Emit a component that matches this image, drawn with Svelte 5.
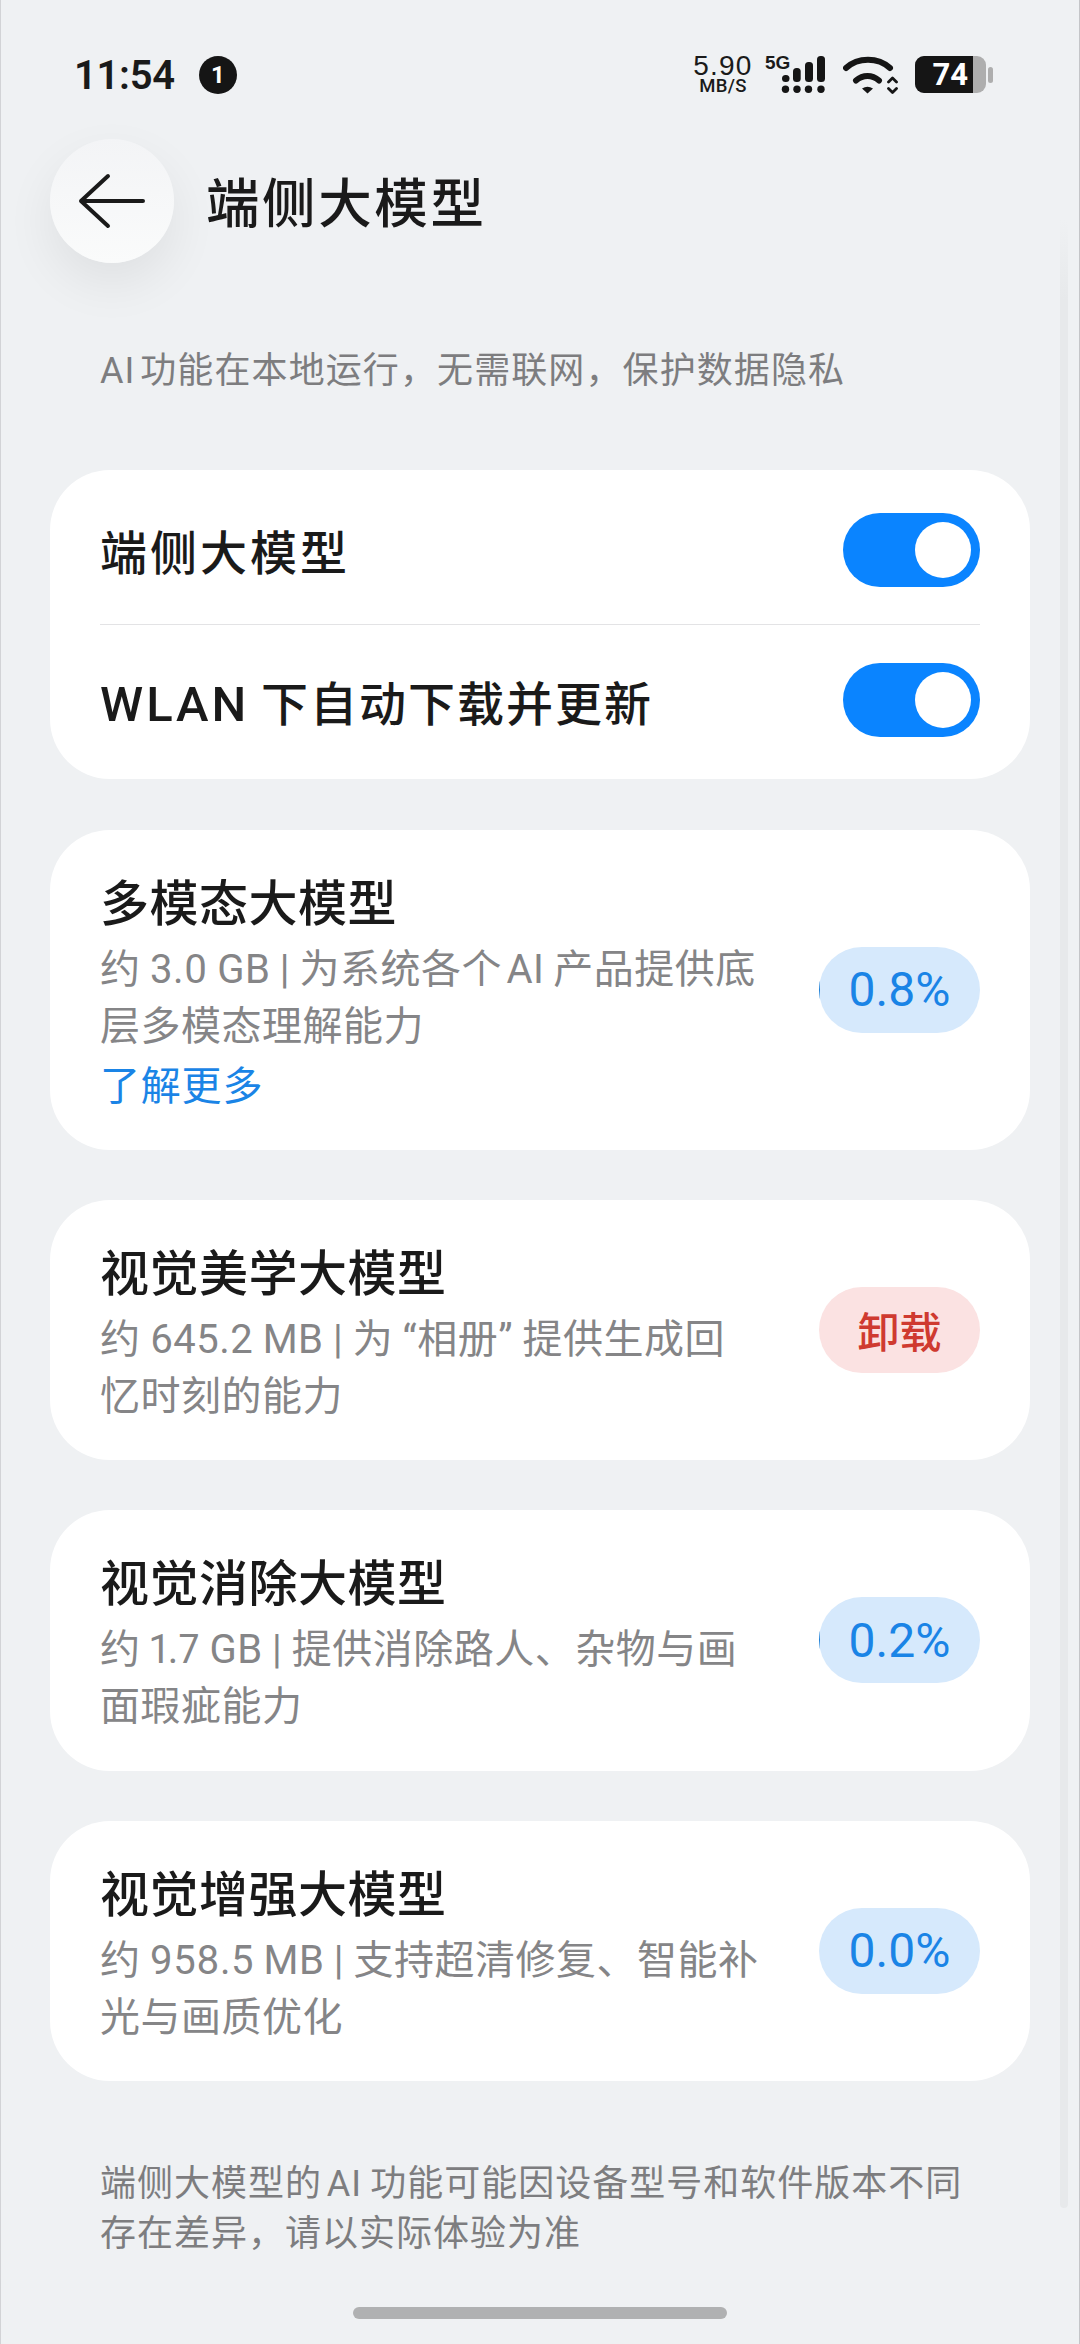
<script>
  const T = '\u2009';
  const H = '\u200a';
  const models = [
    { title: '多模态大模型', lines: [`约 3.0 GB | 为系统各个${H}AI${T}产品提供底`, '层多模态理解能力'], link: '了解更多', progress: 0.8 },
    { title: '视觉美学大模型', lines: ['约 645.2 MB | 为 “相册” 提供生成回', '忆时刻的能力'], action: '卸载' },
    { title: '视觉消除大模型', lines: ['约 1.7 GB | 提供消除路人、杂物与画', '面瑕疵能力'], progress: 0.2 },
    { title: '视觉增强大模型', lines: ['约 958.5 MB | 支持超清修复、智能补', '光与画质优化'], progress: 0.0 }
  ];
</script>

<div class="screen">
  <div class="edge-left"></div>
  <div class="edge-right"></div>
  <div class="edge-strip"></div>

  <div class="status">
    <div class="status-left">
      <span class="time">11:54</span>
      <span class="badge">1</span>
    </div>
    <div class="status-right">
      <div class="speed"><span class="speed-num">5.90</span><span class="speed-unit">MB/S</span></div>
      <div class="signal">
        <span class="five-g">5G</span>
        <svg width="44" height="37" viewBox="0 0 44 37" fill="#151515">
          <circle cx="4.500" cy="33.300" r="3.700"/><circle cx="16" cy="33.300" r="3.700"/><circle cx="27.500" cy="33.300" r="3.700"/><circle cx="40" cy="33.300" r="3.700"/>
          <rect x="1" y="19" width="7.500" height="7" rx="3.500"/>
          <rect x="12" y="12" width="7.700" height="14" rx="3.500"/>
          <rect x="24" y="6" width="8" height="20" rx="3.500"/>
          <rect x="36" y="0" width="8" height="26" rx="3.500"/>
        </svg>
      </div>
      <svg class="wifi" width="56" height="38" viewBox="0 0 56 38" fill="none">
        <path d="M3 12 C15 1 35 1 47 12" stroke="#151515" stroke-width="6" stroke-linecap="round"/>
        <path d="M13 24.500 C20 18.500 29 18.500 36 24.500" stroke="#151515" stroke-width="6" stroke-linecap="round"/>
        <path d="M19 32.500 Q24.500 29 30 32.500 L24.500 37.500 Z" fill="#151515"/>
        <path d="M45.500 26 L49.500 22 L53.500 26 M45.500 32.500 L49.500 36.500 L53.500 32.500" stroke="#151515" stroke-width="2.800" stroke-linecap="round" stroke-linejoin="round"/>
      </svg>
      <div class="battery">
        <div class="battery-body"><div class="battery-fill"><span>74</span></div></div>
        <div class="battery-nub"></div>
      </div>
    </div>
  </div>

  <div class="header">
    <button class="back" aria-label="返回">
      <svg width="70" height="60" viewBox="0 0 70 60" fill="none">
        <path d="M31 5 L4 30 L31 55 M4 30 H66" stroke="#1a1a1a" stroke-width="4" stroke-linecap="round" stroke-linejoin="round"/>
      </svg>
    </button>
    <h1>端侧大模型</h1>
  </div>

  <p class="intro">AI{H}功能在本地运行，无需联网，保护数据隐私</p>

  <div class="card switches">
    <div class="row first">
      <span class="label">端侧大模型</span>
      <span class="toggle"><span class="knob"></span></span>
    </div>
    <div class="divider"></div>
    <div class="row second">
      <span class="label"><span class="latin">WLAN</span>{T}下自动下载并更新</span>
      <span class="toggle"><span class="knob"></span></span>
    </div>
  </div>

  {#each models as m}
    <div class="card model">
      <div class="info">
        <div class="title">{m.title}</div>
        {#each m.lines as l}
          <div class="desc">{l}</div>
        {/each}
        {#if m.link}<div class="link">{m.link}</div>{/if}
      </div>
      {#if m.action}
        <span class="pill danger">{m.action}</span>
      {:else}
        <span class="pill">
          <span class="fill" style="width:{m.progress}%"></span>
          <span class="pct">{m.progress.toFixed(1)}%</span>
        </span>
      {/if}
    </div>
  {/each}

  <p class="footnote">端侧大模型的{H}AI{T}功能可能因设备型号和软件版本不同<br />存在差异，请以实际体验为准</p>

  <div class="home"></div>
</div>

<style>
  :global(body) { margin: 0; background: #eff1f3; }
  .screen {
    position: relative;
    width: 1080px;
    height: 2344px;
    overflow: hidden;
    background: #eff1f3;
    padding: 0 50px;
    box-sizing: border-box;
    font-family: "Roboto", "Noto Sans CJK SC", sans-serif;
    color: #171717;
  }
  .edge-left { position: absolute; left: 0; top: 0; bottom: 0; width: 1px; background: #d2d3d6; }
  .edge-right { position: absolute; right: 0; top: 0; bottom: 0; width: 1px; background: #c4c5c8; }
  .edge-strip { position: absolute; left: 1060px; top: 220px; height: 1988px; width: 8px; border-radius: 0 0 4px 4px; background: linear-gradient(180deg, rgba(230, 232, 234, 0) 0, #e7e9eb 80px); }

  .status { height: 138px; display: flex; justify-content: space-between; box-sizing: border-box; padding: 55px 37px 0 24px; }
  .status-left { display: flex; align-items: center; height: 40px; gap: 24px; }
  .time { font-size: 40px; font-weight: 600; color: #1a1a1a; letter-spacing: -0.3px; }
  .badge { width: 38px; height: 38px; border-radius: 50%; background: #151515; color: #fff; font-size: 24px; font-weight: 700; display: flex; align-items: center; justify-content: center; }
  .status-right { display: flex; align-items: flex-start; height: 40px; }
  .speed { display: flex; flex-direction: column; align-items: center; width: 60px; color: #1a1a1a; }
  .speed-num { font-size: 28px; line-height: 22px; font-family: "Liberation Sans", sans-serif; letter-spacing: 1.200px; }
  .speed-unit { font-size: 18.500px; line-height: 16px; font-weight: 500; margin-top: 1px; letter-spacing: 0.3px; }
  .signal { margin-left: 12px; position: relative; width: 60px; height: 38px; }
  .five-g { font-size: 19px; line-height: 16px; font-weight: 700; font-family: "Liberation Sans", sans-serif; color: #1a1a1a; position: absolute; left: 0; top: 0; }
  .signal svg { position: absolute; right: 0; top: 1px; }
  .wifi { margin-left: 18px; margin-top: 1px; }
  .battery { display: flex; align-items: center; margin-left: 16px; height: 37px; margin-top: 1px; }
  .battery-body { width: 71px; height: 37px; border-radius: 9px; background: #aeaeae; overflow: hidden; }
  .battery-fill { width: 58px; height: 100%; background: #151515; display: flex; align-items: center; justify-content: flex-end; padding-right: 5px; box-sizing: border-box; }
  .battery-fill span { color: #fff; font-size: 31px; font-weight: 700; line-height: 1; }
  .battery-nub { width: 5px; height: 16px; border-radius: 2.500px; background: #aeaeae; margin-left: 2px; }

  .header { display: flex; align-items: center; height: 126px; gap: 32px; }
  .back { width: 124px; height: 124px; border: 0; padding: 0; border-radius: 50%; background: linear-gradient(180deg, #f3f4f6 0%, #fafbfb 100%); box-shadow: 0 20px 50px rgba(0, 0, 0, 0.07); display: flex; align-items: center; justify-content: center; }
  h1 { margin: 0 0 4px; font-size: 53.500px; font-weight: 500; letter-spacing: 2.600px; color: #1a1a1a; }

  .intro { margin: 0; padding: 84px 0 76px 50px; font-size: 36px; line-height: 46px; color: #7d7d7f; letter-spacing: 1.100px; }

  .card { background: #fff; border-radius: 60px; margin-bottom: 50px; padding: 0 50px; }
  .switches { height: 309px; margin-bottom: 51px; }
  .row { height: 154px; display: flex; align-items: center; justify-content: space-between; box-sizing: border-box; }
  .row.first { padding-top: 5px; }
  .row.second { padding-bottom: 4px; }
  .label { font-size: 47px; font-weight: 500; letter-spacing: 3px; color: #1a1a1a; }
  .second .label { letter-spacing: 2px; }
  .second .latin { font-size: 49px; letter-spacing: 3px; }
  .divider { height: 1px; background: #e3e3e5; }
  .toggle { width: 137px; height: 74px; border-radius: 37px; background: #0a84ff; display: flex; align-items: center; justify-content: flex-end; padding-right: 9px; box-sizing: border-box; }
  .knob { width: 56px; height: 56px; border-radius: 50%; background: #fff; }

  .model { display: flex; align-items: center; justify-content: space-between; padding-top: 45px; padding-bottom: 35.500px; }
  .info { flex: 1; min-width: 0; }
  .title { font-size: 49px; line-height: 60px; font-weight: 500; letter-spacing: 0.5px; color: #1a1a1a; margin-bottom: 6px; }
  .desc { font-size: 40px; line-height: 57px; color: #858587; letter-spacing: 0.5px; word-spacing: -1px; white-space: nowrap; font-variant-numeric: proportional-nums; }
  .link { font-size: 40px; line-height: 54px; color: #1a84e6; letter-spacing: 0.8px; margin-top: 5px; }
  .pill { position: relative; overflow: hidden; flex: none; width: 161px; height: 86px; margin-bottom: 9.500px; border-radius: 43px; background: #d6e9fc; display: flex; align-items: center; justify-content: center; }
  .fill { position: absolute; left: 0; top: 0; bottom: 0; background: #1a7fd6; }
  .pct { position: relative; font-size: 48px; color: #1a84e6; }
  .danger { background: #fbe2e2; color: #cf3a30; font-size: 42px; font-weight: 500; }

  .footnote { margin: 0; padding: 28px 50px 0; font-size: 36px; line-height: 50px; color: #7d7d7f; letter-spacing: 1px; }
  .home { position: absolute; left: 353px; top: 2307px; width: 374px; height: 12px; border-radius: 6px; background: #b0b1b2; }
</style>
